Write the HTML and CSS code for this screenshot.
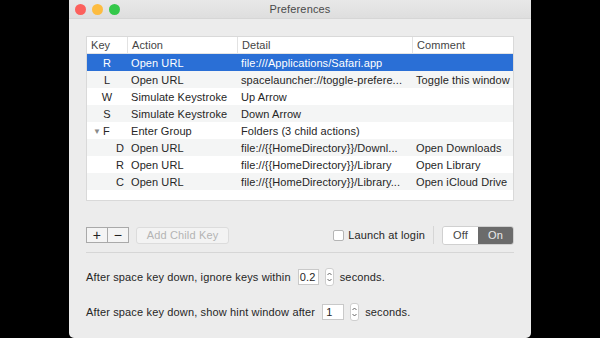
FILE: index.html
```html
<!DOCTYPE html>
<html lang="en">
<head>
    <meta charset="utf-8">
    <title>Preferences</title>
    <link rel="stylesheet" href="styles.css">
</head>
<body>
    <div class="window">
        <div class="titlebar">
            <div class="lights">
                <span class="light red"></span>
                <span class="light yellow"></span>
                <span class="light green"></span>
            </div>
            <div class="title">Preferences</div>
        </div>

        <div class="content">
            <div class="table">
                <div class="row head">
                    <div class="cell">Key</div>
                    <div class="cell">Action</div>
                    <div class="cell">Detail</div>
                    <div class="cell">Comment</div>
                </div>
                <div class="row selected">
                    <div class="cell key">R</div>
                    <div class="cell">Open URL</div>
                    <div class="cell">file:///Applications/Safari.app</div>
                    <div class="cell"></div>
                </div>
                <div class="row">
                    <div class="cell key">L</div>
                    <div class="cell">Open URL</div>
                    <div class="cell">spacelauncher://toggle-prefere...</div>
                    <div class="cell">Toggle this window</div>
                </div>
                <div class="row">
                    <div class="cell key">W</div>
                    <div class="cell">Simulate Keystroke</div>
                    <div class="cell">Up Arrow</div>
                    <div class="cell"></div>
                </div>
                <div class="row">
                    <div class="cell key">S</div>
                    <div class="cell">Simulate Keystroke</div>
                    <div class="cell">Down Arrow</div>
                    <div class="cell"></div>
                </div>
                <div class="row">
                    <div class="cell key group"><span class="disclosure">&#9660;</span>F</div>
                    <div class="cell">Enter Group</div>
                    <div class="cell">Folders (3 child actions)</div>
                    <div class="cell"></div>
                </div>
                <div class="row">
                    <div class="cell key child">D</div>
                    <div class="cell">Open URL</div>
                    <div class="cell">file://{{HomeDirectory}}/Downl...</div>
                    <div class="cell">Open Downloads</div>
                </div>
                <div class="row">
                    <div class="cell key child">R</div>
                    <div class="cell">Open URL</div>
                    <div class="cell">file://{{HomeDirectory}}/Library</div>
                    <div class="cell">Open Library</div>
                </div>
                <div class="row">
                    <div class="cell key child">C</div>
                    <div class="cell">Open URL</div>
                    <div class="cell">file://{{HomeDirectory}}/Library...</div>
                    <div class="cell">Open iCloud Drive</div>
                </div>
            </div>

            <div class="controls">
                <div class="plusminus">
                    <span class="pm">+</span>
                    <span class="pm">&minus;</span>
                </div>
                <div class="btn disabled">Add Child Key</div>
                <div class="spacer"></div>
                <label class="check"><span class="box"></span>Launch at login</label>
                <div class="vsep"></div>
                <div class="segment">
                    <span class="seg">Off</span>
                    <span class="seg on">On</span>
                </div>
            </div>

            <div class="hsep"></div>

            <div class="setting">
                <span>After space key down, ignore keys within</span>
                <span class="field short">0.2</span>
                <span class="stepper">
                    <svg width="9" height="18" viewBox="0 0 9 18"><path d="M2.5 7 L4.5 5 L6.5 7 M2.5 11 L4.5 13 L6.5 11" fill="none" stroke="#555" stroke-width="0.9"/></svg>
                </span>
                <span>seconds.</span>
            </div>
            <div class="setting">
                <span>After space key down, show hint window after</span>
                <span class="field">1</span>
                <span class="stepper">
                    <svg width="9" height="18" viewBox="0 0 9 18"><path d="M2.5 7 L4.5 5 L6.5 7 M2.5 11 L4.5 13 L6.5 11" fill="none" stroke="#555" stroke-width="0.9"/></svg>
                </span>
                <span>seconds.</span>
            </div>
        </div>
    </div>
</body>
</html>
```

FILE: styles.css
```css
html, body {
    margin: 0;
    height: 338px;
    overflow: hidden;
    background: #000;
}

body {
    font-family: "Liberation Sans", Arial, sans-serif;
    font-size: 11px;
    letter-spacing: 0.15px;
    color: #262626;
}

.window {
    width: 462px;
    height: 338px;
    margin: 0 auto;
    background: #ececec;
    border-radius: 0 0 5px 5px;
}

.titlebar {
    height: 19px;
    display: grid;
    grid-template-columns: 1fr auto 1fr;
    align-items: center;
    background: linear-gradient(#e8e8e8, #dedede);
    border-bottom: 1px solid #d6d6d6;
    box-sizing: border-box;
}

.lights {
    display: flex;
    gap: 6px;
    padding-left: 6px;
}

.light {
    width: 11px;
    height: 11px;
    border-radius: 50%;
}
.red { background: #fc605c; }
.yellow { background: #fdbc40; }
.green { background: #34c84a; }

.title {
    color: #4a4a4a;
}

.content {
    padding: 17px 17px 0 17px;
}

/* key table */
.table {
    height: 165px;
    background: #fff;
    border: 1px solid #d9d9d9;
    box-sizing: border-box;
    letter-spacing: 0.08px;
}

.row {
    display: grid;
    grid-template-columns: 40px 110px 175px 1fr;
    height: 17px;
    align-items: center;
}

.row:nth-child(odd) {
    background: #f4f5f5;
}

.cell {
    padding-left: 4px;
    white-space: nowrap;
    overflow: hidden;
}

.row.head {
    background: #fff;
    color: #444;
    height: 16px;
    border-bottom: 1px solid #e4e4e4;
}

.row.head .cell {
    height: 100%;
    display: flex;
    align-items: center;
}

.row.head .cell + .cell {
    border-left: 1px solid #e2e2e2;
}

.row.selected {
    background: #2a6fd6;
    color: #fff;
}

.key {
    text-align: center;
    padding-left: 0;
}

.key.child {
    text-align: right;
    padding-right: 3px;
}

.key.group {
    text-align: left;
    padding-left: 6px;
}

.disclosure {
    color: #8a8a8a;
    font-size: 8px;
    margin-right: 2px;
    vertical-align: 1px;
}

/* buttons row */
.controls {
    display: flex;
    align-items: center;
    height: 18px;
    margin-top: 25px;
}

.plusminus {
    display: flex;
    border: 1px solid #a9a9a9;
    background: #f4f4f4;
    height: 16px;
    box-sizing: border-box;
}

.pm {
    width: 20px;
    text-align: center;
    font-size: 14px;
    line-height: 14px;
    color: #222;
}

.pm + .pm {
    border-left: 1px solid #a9a9a9;
}

.btn {
    margin-left: 7px;
    height: 17px;
    width: 93px;
    box-sizing: border-box;
    border: 1px solid #dcdcdc;
    border-radius: 3px;
    background: #f3f3f3;
    display: flex;
    align-items: center;
    justify-content: center;
}

.btn.disabled {
    color: #b4b4b4;
}

.spacer {
    flex: 1;
}

.check {
    display: flex;
    align-items: center;
    gap: 4px;
}

.box {
    width: 11px;
    height: 11px;
    box-sizing: border-box;
    background: #fff;
    border: 1px solid #b5b5b5;
    border-radius: 2px;
}

.vsep {
    width: 1px;
    height: 18px;
    background: #d6d6d6;
    margin: 0 8px;
}

.segment {
    display: flex;
    height: 17px;
    border-radius: 3px;
    overflow: hidden;
    border: 1px solid #d0d0d0;
}

.seg {
    width: 35px;
    display: flex;
    align-items: center;
    justify-content: center;
    background: #fff;
    color: #444;
}

.seg.on {
    background: #6b6b6b;
    color: #ececec;
}

.hsep {
    height: 1px;
    background: #d6d6d6;
    margin-top: 8px;
}

/* settings */
.setting {
    display: flex;
    align-items: center;
    gap: 6px;
    height: 18px;
    margin-top: 15px;
}

.setting + .setting {
    margin-top: 17px;
}

.field {
    width: 22px;
    height: 16px;
    box-sizing: border-box;
    background: #fff;
    border: 1px solid #c9c9c9;
    padding-left: 3px;
    display: flex;
    align-items: center;
    margin-left: 1px;
}

.field.short {
    width: 21px;
    padding-left: 1px;
}

.stepper {
    width: 9px;
    height: 18px;
    box-sizing: border-box;
    background: #fff;
    border: 1px solid #cfcfcf;
    border-radius: 3px;
    display: flex;
}

.stepper svg {
    margin: -1px;
}
```
